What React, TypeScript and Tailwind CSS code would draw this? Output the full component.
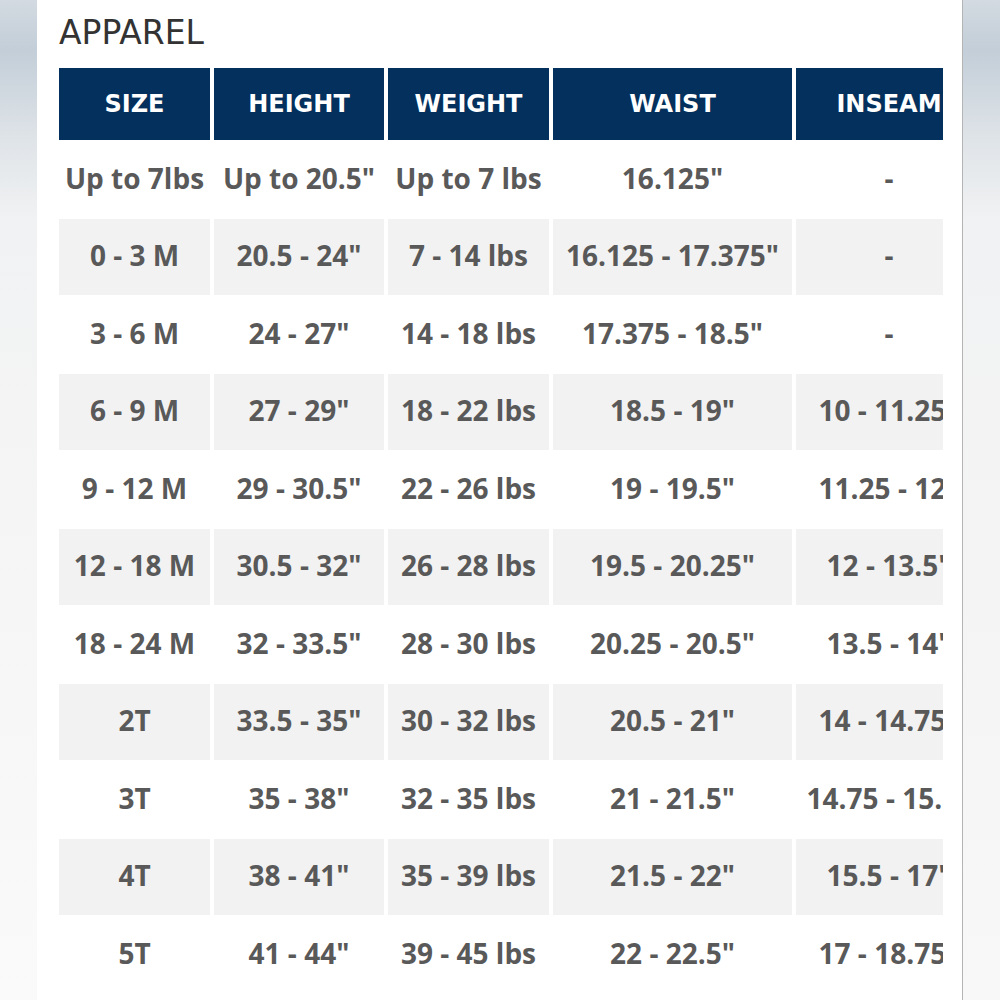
const headers = ['SIZE', 'HEIGHT', 'WEIGHT', 'WAIST', 'INSEAM'];

const rows = [
  ['Up to 7lbs', 'Up to 20.5"', 'Up to 7 lbs', '16.125"', '-'],
  ['0 - 3 M', '20.5 - 24"', '7 - 14 lbs', '16.125 - 17.375"', '-'],
  ['3 - 6 M', '24 - 27"', '14 - 18 lbs', '17.375 - 18.5"', '-'],
  ['6 - 9 M', '27 - 29"', '18 - 22 lbs', '18.5 - 19"', '10 - 11.25"'],
  ['9 - 12 M', '29 - 30.5"', '22 - 26 lbs', '19 - 19.5"', '11.25 - 12"'],
  ['12 - 18 M', '30.5 - 32"', '26 - 28 lbs', '19.5 - 20.25"', '12 - 13.5"'],
  ['18 - 24 M', '32 - 33.5"', '28 - 30 lbs', '20.25 - 20.5"', '13.5 - 14"'],
  ['2T', '33.5 - 35"', '30 - 32 lbs', '20.5 - 21"', '14 - 14.75"'],
  ['3T', '35 - 38"', '32 - 35 lbs', '21 - 21.5"', '14.75 - 15.5"'],
  ['4T', '38 - 41"', '35 - 39 lbs', '21.5 - 22"', '15.5 - 17"'],
  ['5T', '41 - 44"', '39 - 45 lbs', '22 - 22.5"', '17 - 18.75"'],
];

export default function App() {
  return (
    <div className="flex h-[1000px] w-[1000px] overflow-hidden bg-white">
      <div className="w-[37px] shrink-0 bg-[linear-gradient(180deg,#d3dae1_0%,#c3ced8_5%,#dfe4e8_14%,#f1f2f3_22%,#f6f6f6_60%,#fafafa_100%)]" />

      <div className="flex-1 overflow-hidden bg-white pl-[22px]">
        <h1 className="pt-[12px] font-['DejaVu_Sans',sans-serif] text-[33px] leading-[42px] text-[#333]">
          APPAREL
        </h1>

        <div className="mt-[14px] w-[884px] overflow-hidden">
          <div className="grid w-max grid-cols-[151px_170px_161px_239px_186px] gap-x-[4px] gap-y-[1px]">
            {headers.map((h) => (
              <div
                key={h}
                className="flex h-[72px] items-center justify-center bg-[#03305c] font-['DejaVu_Sans',sans-serif] text-[24px] font-bold text-white"
              >
                {h}
              </div>
            ))}
            {rows.map((row, i) =>
              row.map((cell, j) => (
                <div
                  key={i + '-' + j}
                  className={`flex h-[76.5px] items-center justify-center whitespace-nowrap pb-[3px] font-['Open_Sans',sans-serif] text-[28px] font-bold text-[#595959] ${
                    i % 2 === 1 ? 'bg-[#f2f2f2]' : 'bg-white'
                  }`}
                >
                  {cell}
                </div>
              ))
            )}
          </div>
        </div>
      </div>

      <div className="w-[38px] shrink-0 border-l border-[#b4b4b4] bg-[linear-gradient(180deg,#d3dae1_0%,#c3ced8_5%,#dfe4e8_14%,#f1f2f3_22%,#f4f4f4_60%,#f8f8f8_100%)]" />
    </div>
  );
}
